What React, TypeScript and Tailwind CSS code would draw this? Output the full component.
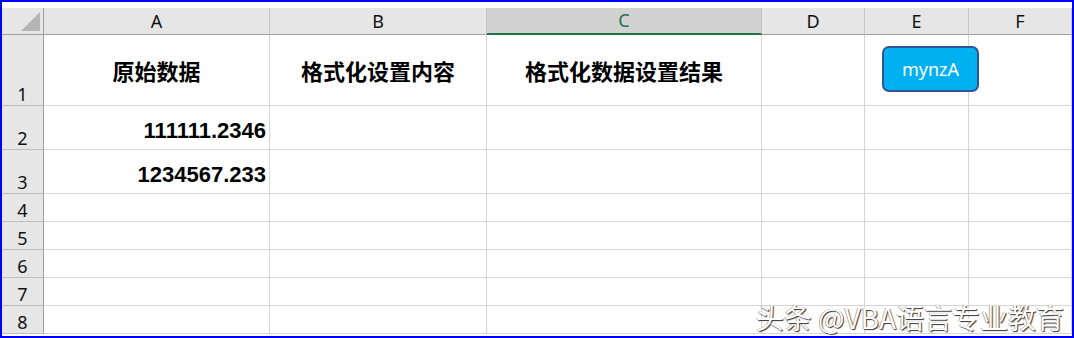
import React from 'react';

const cols = ['A', 'B', 'C', 'D', 'E', 'F'];
const colWidths = ['w-[226px]', 'w-[217px]', 'w-[275px]', 'w-[103px]', 'w-[104px]', 'w-[103px]'];
const rowHeights = ['h-[71px]', 'h-[44px]', 'h-[44px]', 'h-[28px]', 'h-[28px]', 'h-[28px]', 'h-[28px]', 'h-[28px]'];

const cjk = "font-['Noto_Sans_CJK_SC',sans-serif]";

// cell content keyed by row/col
const content: Record<string, React.ReactNode> = {
  '0-0': <span className={`${cjk} text-[22px] font-bold text-black`}>原始数据</span>,
  '0-1': <span className={`${cjk} text-[22px] font-bold text-black`}>格式化设置内容</span>,
  '0-2': <span className={`${cjk} text-[22px] font-bold text-black`}>格式化数据设置结果</span>,
  '1-0': <span className="font-['Liberation_Sans',sans-serif] text-[22px] leading-[24px] font-bold text-black">111111.2346</span>,
  '2-0': <span className="font-['Liberation_Sans',sans-serif] text-[22px] leading-[24px] font-bold text-black">1234567.233</span>,
};

export default function App() {
  return (
    <div className="relative w-[1074px] h-[338px] border-2 border-[#0000ff] bg-white overflow-hidden">
      <div className="h-[6px]" />
      {/* column header */}
      <div className="flex h-[27px]">
        <div className="relative w-[42px] h-full bg-[#e6e6e6] border-r border-b border-[#9f9f9f]">
          <svg className="absolute right-[3px] bottom-[3px]" width="19" height="19" viewBox="0 0 19 19">
            <polygon points="19,0 19,19 0,19" fill="#b4b4b4" />
          </svg>
        </div>
        {cols.map((c, i) => (
          <div
            key={c}
            className={`${colWidths[i]} h-full flex items-center justify-center font-['Noto_Sans',sans-serif] text-[18px] ${
              c === 'C'
                ? 'bg-[#d2d2d2] border-b-2 border-b-[#217346] text-[#217346] border-r border-r-[#c0c0c0]'
                : 'bg-[#e6e6e6] border-b border-b-[#9f9f9f] text-[#111] border-r border-r-[#c6c6c6]'
            }`}
          >
            {c}
          </div>
        ))}
      </div>
      {/* rows */}
      {rowHeights.map((h, r) => (
        <div key={r} className={`flex ${h}`}>
          <div className="w-[42px] h-full bg-[#e6e6e6] border-r border-r-[#9f9f9f] border-b border-b-[#bdbdbd] flex items-end justify-center font-['Noto_Sans',sans-serif] text-[18px] leading-[22px] text-[#111]">
            {r + 1}
          </div>
          {cols.map((c, i) => {
            const node = content[`${r}-${i}`];
            const align = r === 0 ? 'items-center justify-center' : 'items-end justify-end pr-[3px] pb-[6px]';
            return (
              <div key={c} className={`${colWidths[i]} h-full border-r border-b border-[#d4d4d4] flex ${align}`}>
                {node}
              </div>
            );
          })}
        </div>
      ))}

      {/* shape button over E1 */}
      <div className="absolute left-[880px] top-[44px] w-[97px] h-[46px] rounded-[7px] bg-[#00b0f0] border-2 border-[#2f5597] flex items-center justify-center font-['Noto_Sans',sans-serif] text-[18px] text-white">
        mynzA
      </div>

      {/* watermark */}
      <div className={`absolute right-[8px] bottom-[1px] ${cjk} text-[28px] leading-[36px] text-white [text-shadow:1px_1px_1px_#333,-0.5px_-0.5px_0_#777]`}>
        头条 @VBA语言专业教育
      </div>
    </div>
  );
}
